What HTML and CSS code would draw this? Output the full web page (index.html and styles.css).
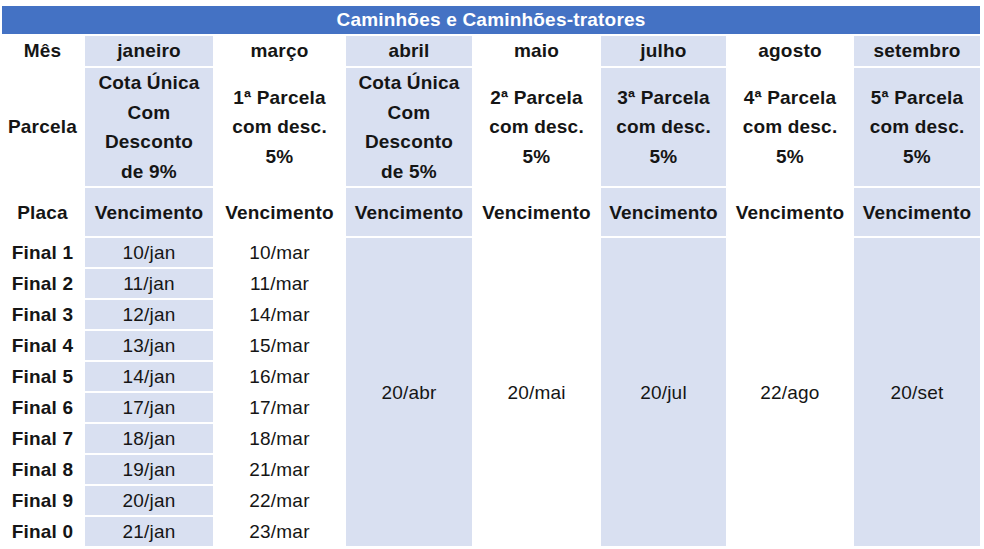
FILE: index.html
```html
<!DOCTYPE html>
<html lang="pt-BR">
<head>
<meta charset="utf-8">
<title>Caminhões e Caminhões-tratores</title>
<link rel="stylesheet" href="styles.css">
</head>
<body>
<table class="ipva">
  <colgroup>
    <col class="c-label">
    <col class="c-jan">
    <col class="c-mar">
    <col class="c-abr">
    <col class="c-mai">
    <col class="c-jul">
    <col class="c-ago">
    <col class="c-set">
  </colgroup>
  <tr class="r-title">
    <th colspan="8" class="title">Caminhões e Caminhões-tratores</th>
  </tr>
  <tr class="r-month">
    <th>Mês</th>
    <th class="sh">janeiro</th>
    <th>março</th>
    <th class="sh">abril</th>
    <th>maio</th>
    <th class="sh">julho</th>
    <th>agosto</th>
    <th class="sh">setembro</th>
  </tr>
  <tr class="r-parc">
    <th>Parcela</th>
    <th class="sh">Cota Única<br>Com<br>Desconto<br>de 9%</th>
    <th>1ª Parcela<br>com desc.<br>5%</th>
    <th class="sh">Cota Única<br>Com<br>Desconto<br>de 5%</th>
    <th>2ª Parcela<br>com desc.<br>5%</th>
    <th class="sh">3ª Parcela<br>com desc.<br>5%</th>
    <th>4ª Parcela<br>com desc.<br>5%</th>
    <th class="sh">5ª Parcela<br>com desc.<br>5%</th>
  </tr>
  <tr class="r-placa">
    <th>Placa</th>
    <th class="sh">Vencimento</th>
    <th>Vencimento</th>
    <th class="sh">Vencimento</th>
    <th>Vencimento</th>
    <th class="sh">Vencimento</th>
    <th>Vencimento</th>
    <th class="sh">Vencimento</th>
  </tr>
  <tr class="r-final">
    <th>Final 1</th>
    <td class="sh">10/jan</td>
    <td>10/mar</td>
    <td class="sh" rowspan="10">20/abr</td>
    <td rowspan="10">20/mai</td>
    <td class="sh" rowspan="10">20/jul</td>
    <td rowspan="10">22/ago</td>
    <td class="sh" rowspan="10">20/set</td>
  </tr>
  <tr class="r-final"><th>Final 2</th><td class="sh">11/jan</td><td>11/mar</td></tr>
  <tr class="r-final"><th>Final 3</th><td class="sh">12/jan</td><td>14/mar</td></tr>
  <tr class="r-final"><th>Final 4</th><td class="sh">13/jan</td><td>15/mar</td></tr>
  <tr class="r-final"><th>Final 5</th><td class="sh">14/jan</td><td>16/mar</td></tr>
  <tr class="r-final"><th>Final 6</th><td class="sh">17/jan</td><td>17/mar</td></tr>
  <tr class="r-final"><th>Final 7</th><td class="sh">18/jan</td><td>18/mar</td></tr>
  <tr class="r-final"><th>Final 8</th><td class="sh">19/jan</td><td>21/mar</td></tr>
  <tr class="r-final"><th>Final 9</th><td class="sh">20/jan</td><td>22/mar</td></tr>
  <tr class="r-final"><th>Final 0</th><td class="sh">21/jan</td><td>23/mar</td></tr>
</table>
</body>
</html>
```
FILE: styles.css
```css
html, body {
  margin: 0;
  padding: 0;
  background: #ffffff;
}

body {
  padding-top: 4px;
  font-family: "Liberation Sans", Arial, sans-serif;
  color: #151515;
}

.ipva {
  border-collapse: separate;
  border-spacing: 2px;
  table-layout: fixed;
  width: 982px;
  font-size: 19px;
  letter-spacing: 0.2px;
}

.c-label { width: 81px; }
.c-jan { width: 128px; }
.c-mar { width: 129px; }
.c-abr { width: 126px; }
.c-mai { width: 125px; }
.c-jul { width: 125px; }
.c-ago { width: 124px; }
.c-set { width: 126px; }

.ipva th,
.ipva td {
  padding: 0;
  text-align: center;
  vertical-align: middle;
  white-space: nowrap;
}

.ipva th {
  font-weight: bold;
}

.ipva td {
  font-weight: normal;
}

.sh {
  background: #d9e0f1;
}

.title {
  background: #4472c4;
  color: #ffffff;
  height: 28px;
  line-height: 28px;
}

.r-month th {
  height: 30px;
  line-height: 30px;
}

.r-parc th {
  height: 118px;
  line-height: 29.5px;
}

.r-placa th {
  height: 48px;
  line-height: 29px;
}

.r-final th,
.r-final td {
  height: 29px;
  line-height: 29px;
}
```
